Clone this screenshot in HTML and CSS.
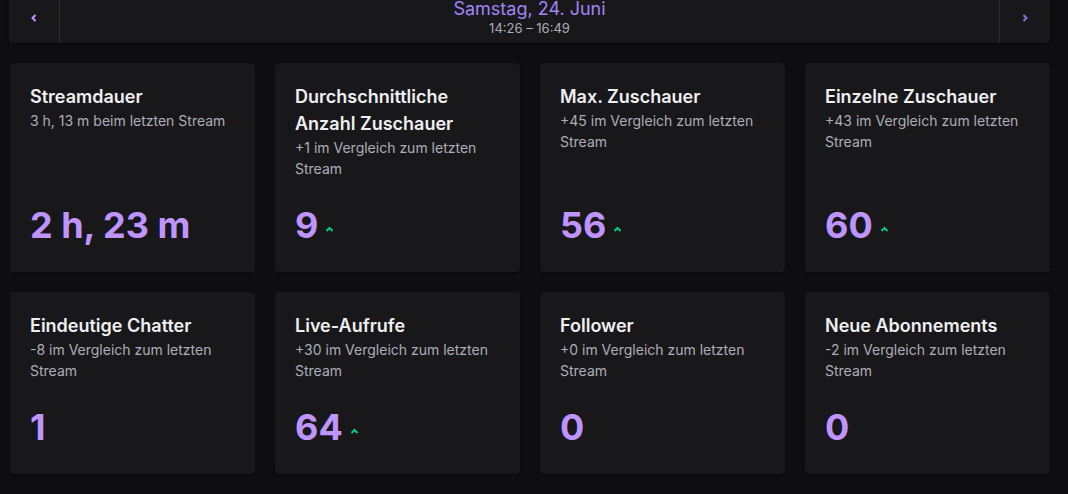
FILE: index.html
```html
<!DOCTYPE html>
<html lang="de">
<head>
<meta charset="utf-8">
<title>Stream-Zusammenfassung</title>
<link rel="stylesheet" href="styles.css">
</head>
<body>
<div class="page">
  <div class="datebar">
    <button class="nav nav-prev" aria-label="Zurück">
      <svg width="6" height="8" viewBox="0 0 6 8"><path d="M4.5 1 L1.5 4 L4.5 7" fill="none" stroke="#bf94ff" stroke-width="2"/></svg>
    </button>
    <div class="datecenter">
      <div class="date">Samstag, 24. Juni</div>
      <div class="time">14:26 – 16:49</div>
    </div>
    <button class="nav nav-next" aria-label="Weiter">
      <svg width="6" height="8" viewBox="0 0 6 8"><path d="M1.5 1 L4.5 4 L1.5 7" fill="none" stroke="#8a6fd6" stroke-width="2"/></svg>
    </button>
  </div>

  <div class="grid">
    <div class="card">
      <div class="title">Streamdauer</div>
      <div class="sub">3 h, 13 m beim letzten Stream</div>
      <div class="valuerow"><span class="value">2 h, 23 m</span></div>
    </div>
    <div class="card">
      <div class="title">Durchschnittliche Anzahl Zuschauer</div>
      <div class="sub">+1 im Vergleich zum letzten Stream</div>
      <div class="valuerow"><span class="value">9</span><svg class="up" width="9" height="6" viewBox="0 0 9 6"><path d="M1.5 5 L4.5 2 L7.5 5" fill="none" stroke="#00c98a" stroke-width="2"/></svg></div>
    </div>
    <div class="card">
      <div class="title">Max. Zuschauer</div>
      <div class="sub">+45 im Vergleich zum letzten Stream</div>
      <div class="valuerow"><span class="value">56</span><svg class="up" width="9" height="6" viewBox="0 0 9 6"><path d="M1.5 5 L4.5 2 L7.5 5" fill="none" stroke="#00c98a" stroke-width="2"/></svg></div>
    </div>
    <div class="card">
      <div class="title">Einzelne Zuschauer</div>
      <div class="sub">+43 im Vergleich zum letzten Stream</div>
      <div class="valuerow"><span class="value">60</span><svg class="up" width="9" height="6" viewBox="0 0 9 6"><path d="M1.5 5 L4.5 2 L7.5 5" fill="none" stroke="#00c98a" stroke-width="2"/></svg></div>
    </div>
    <div class="card">
      <div class="title">Eindeutige Chatter</div>
      <div class="sub">-8 im Vergleich zum letzten Stream</div>
      <div class="valuerow"><span class="value">1</span></div>
    </div>
    <div class="card">
      <div class="title">Live-Aufrufe</div>
      <div class="sub">+30 im Vergleich zum letzten Stream</div>
      <div class="valuerow"><span class="value">64</span><svg class="up" width="9" height="6" viewBox="0 0 9 6"><path d="M1.5 5 L4.5 2 L7.5 5" fill="none" stroke="#00c98a" stroke-width="2"/></svg></div>
    </div>
    <div class="card">
      <div class="title">Follower</div>
      <div class="sub">+0 im Vergleich zum letzten Stream</div>
      <div class="valuerow"><span class="value">0</span></div>
    </div>
    <div class="card">
      <div class="title">Neue Abonnements</div>
      <div class="sub">-2 im Vergleich zum letzten Stream</div>
      <div class="valuerow"><span class="value">0</span></div>
    </div>
  </div>
</div>
</body>
</html>
```

FILE: styles.css
```css
* { box-sizing: border-box; }
html, body {
  margin: 0;
  padding: 0;
  background: #0e0e10;
}
body {
  font-family: Inter, "Noto Sans", "Liberation Sans", sans-serif;
  color: #efeff1;
  width: 1068px;
  height: 494px;
  overflow: hidden;
}
.page {
  padding: 0 18px 0 10px;
}
.datebar {
  display: flex;
  height: 43px;
  margin-left: -1px;
  background: #18181b;
  border-radius: 0 0 4px 4px;
  box-shadow: 0 1px 3px rgba(0,0,0,0.5);
}
.nav {
  width: 51px;
  flex: none;
  display: flex;
  justify-content: center;
  align-items: flex-start;
  padding: 14px 0 0 0;
  background: transparent;
  border: none;
  margin: 0;
  cursor: pointer;
}
.nav-prev { border-right: 1px solid #2c2c31; }
.nav-next { border-left: 1px solid #2c2c31; }
.datecenter {
  flex: 1;
  display: flex;
  flex-direction: column;
  align-items: center;
}
.date {
  font-size: 18px;
  line-height: 18px;
  color: #a383f6;
}
.time {
  margin-top: 2px;
  font-size: 13px;
  line-height: 16px;
  color: #adadb8;
}
.grid {
  margin-top: 20px;
  display: grid;
  grid-template-columns: repeat(4, 245px);
  gap: 20px;
}
.card {
  background: #18181b;
  border-radius: 4px;
  padding: 20px 20px 25px;
  display: flex;
  flex-direction: column;
  box-shadow: 0 1px 2px rgba(0,0,0,0.4);
}
.title {
  font-size: 18px;
  font-weight: 600;
  line-height: 27px;
  color: #efeff1;
}
.sub {
  font-size: 14px;
  line-height: 21px;
  color: #adadb8;
}
.valuerow {
  margin-top: auto;
  padding-top: 24px;
  display: flex;
  align-items: center;
}
.value {
  font-size: 36px;
  font-weight: 700;
  line-height: 44px;
  color: #bf94ff;
}
.up {
  margin-left: 7px;
  margin-top: 8px;
}
```
